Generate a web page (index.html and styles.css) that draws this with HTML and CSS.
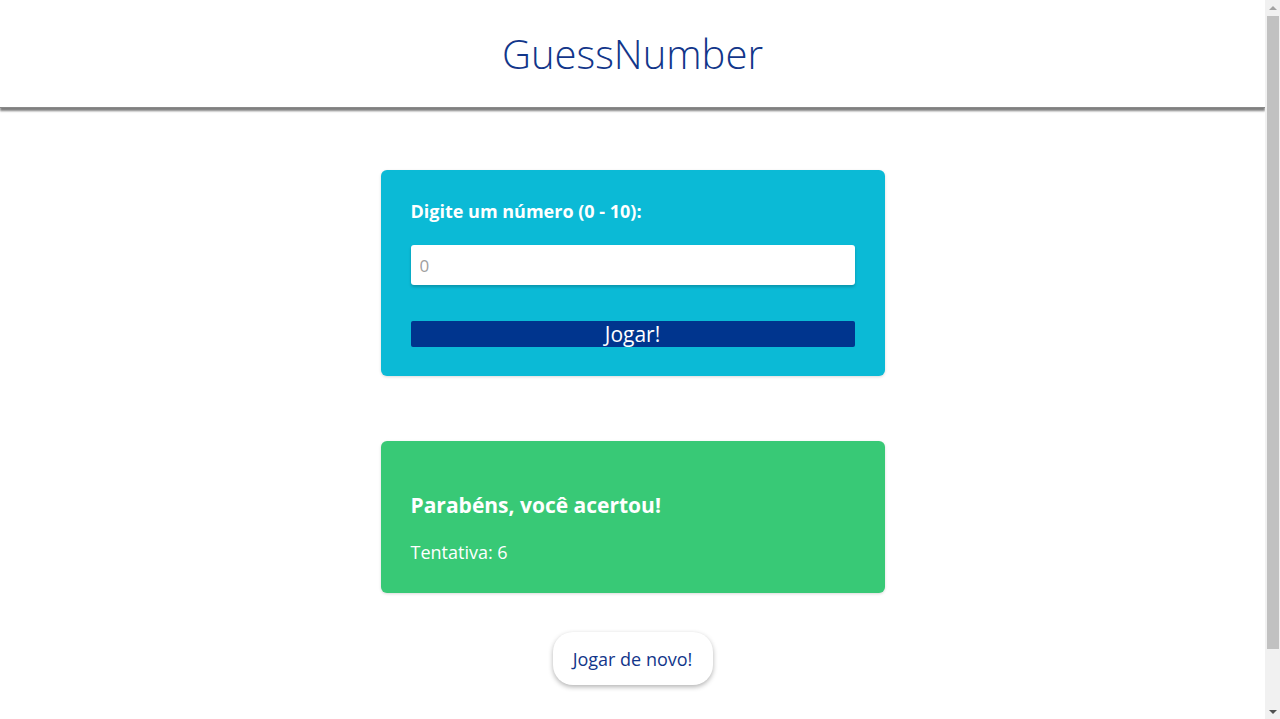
FILE: index.html
```html
<!DOCTYPE html>
<html lang="pt-BR">
<head>
<meta charset="utf-8">
<title>GuessNumber</title>
<link rel="stylesheet" href="styles.css">
</head>
<body>
<div class="page">
  <header class="header">
    <h1 class="title">GuessNumber</h1>
  </header>
  <main class="main">
    <form class="card card-form" onsubmit="return false;">
      <label class="label" for="guess">Digite um número (0 - 10):</label>
      <input class="input" id="guess" type="number" placeholder="0">
      <button class="btn-play" type="submit">Jogar!</button>
    </form>
    <section class="card card-result">
      <h2 class="result-title">Parabéns, você acertou!</h2>
      <p class="result-text">Tentativa: 6</p>
    </section>
    <button class="btn-again" type="button">Jogar de novo!</button>
  </main>
</div>
<div class="scrollbar" aria-hidden="true">
  <span class="sb-arrow sb-up"></span>
  <span class="sb-thumb"></span>
  <span class="sb-arrow sb-down"></span>
</div>
</body>
</html>
```
FILE: styles.css
```css
* { box-sizing: border-box; }
html, body { margin: 0; padding: 0; }
body {
  font-family: "Open Sans", "Noto Sans", sans-serif;
  background: #ffffff;
  color: #fff;
}
.page {
  width: calc(100% - 15px);
}
.header {
  height: 108px;
  background: #fff;
  display: flex;
  align-items: center;
  justify-content: center;
  box-shadow: 0 3px 2px rgba(0,0,0,0.5);
  border-bottom: 1px solid #8a8a8a;
}
.title {
  margin: 0;
  font-weight: 300;
  font-size: 40px;
  color: #12368a;
}
.main {
  display: flex;
  flex-direction: column;
  align-items: center;
  padding: 62px 0 91px;
}
.card {
  width: 504px;
  border-radius: 6px;
  padding: 30px;
  box-shadow: 0 1px 3px rgba(0,0,0,0.15);
}
.card-form {
  background: #0bbad6;
  display: flex;
  flex-direction: column;
  padding-top: 28px;
  padding-bottom: 29px;
}
.label {
  font-weight: 700;
  font-size: 18px;
  line-height: 26px;
  color: #fff;
}
.input {
  margin-top: 21px;
  height: 40px;
  border: none;
  border-radius: 3px;
  padding: 0 9px;
  font-family: inherit;
  font-size: 17px;
  color: #333;
  background: #fff;
  box-shadow: 0 2px 3px rgba(0,0,0,0.2);
  outline: none;
}
.input::placeholder { color: #a0a0a0; }
.btn-play {
  margin-top: 36px;
  height: 26px;
  border: none;
  border-radius: 2px;
  background: #00358e;
  color: #fff;
  font-family: inherit;
  font-size: 21px;
  line-height: 26px;
  padding: 0;
}
.card-result {
  margin-top: 65px;
  background: #38c976;
  padding-top: 49px;
  padding-bottom: 26px;
}
.result-title {
  margin: 0;
  font-size: 21px;
  font-weight: 700;
  line-height: 30px;
}
.result-text {
  margin: 17px 0 0;
  font-size: 18px;
  font-weight: 400;
  line-height: 30px;
}
.btn-again {
  margin-top: 39px;
  width: 160px;
  height: 53px;
  border: none;
  border-radius: 20px;
  background: #fff;
  color: #12368a;
  font-family: inherit;
  font-size: 18px;
  box-shadow: 0 2px 5px rgba(0,0,0,0.3);
}
.scrollbar {
  position: fixed;
  top: 0;
  right: 0;
  width: 15px;
  height: 100%;
  background: #f1f1f1;
  display: flex;
  flex-direction: column;
  align-items: center;
}
.sb-arrow {
  height: 15px;
  width: 15px;
  display: flex;
  align-items: center;
  justify-content: center;
  flex: none;
}
.sb-up::before, .sb-down::before {
  content: "";
  width: 0;
  height: 0;
  border-left: 4px solid transparent;
  border-right: 4px solid transparent;
}
.sb-up::before { border-bottom: 4px solid #a3a3a3; }
.sb-down::before { border-top: 4px solid #505050; }
.sb-thumb {
  width: 12px;
  height: 633px;
  margin-top: 1px;
  background: #c1c1c1;
  flex: none;
}
.sb-down { margin-top: auto; }
```
